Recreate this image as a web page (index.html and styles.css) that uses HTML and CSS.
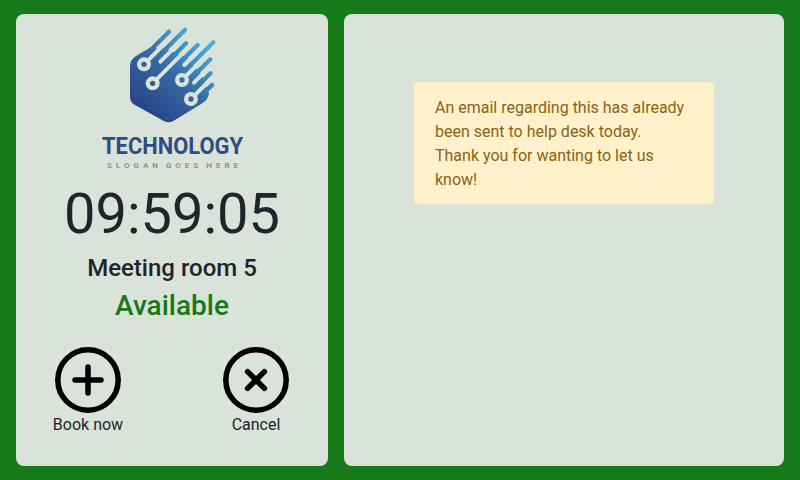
FILE: index.html
```html
<!DOCTYPE html>
<html lang="en">
<head>
<meta charset="utf-8">
<title>Meeting room 5</title>
<link rel="stylesheet" href="styles.css">
</head>
<body>
<main class="screen">
  <section class="card side">
    <svg class="logo" viewBox="80 25 184 156" width="184" height="156" role="img" aria-label="Technology logo">
      <defs>
        <linearGradient id="lg" gradientUnits="userSpaceOnUse" x1="40" y1="260" x2="240" y2="40">
          <stop offset="0" stop-color="#28408a"/>
          <stop offset=".5" stop-color="#35689f"/>
          <stop offset="1" stop-color="#48b0e8"/>
        </linearGradient>
      </defs>
      <g transform="translate(125 25) scale(.3333)">
        <path fill="url(#lg)" d="M15 125Q15 105 32 94L72 70L120 70L190 100L230 150L252 205Q250 225 232 235L150 285Q133 297 115 287L30 240Q15 232 15 215Z"/>
        <g fill="none" stroke="url(#lg)" stroke-width="13" stroke-linecap="round">
          <path d="M75 77L132 20"/>
          <path d="M105 89L180 14"/>
          <path d="M115 123L183 55"/>
          <path d="M160 118L218 60"/>
          <path d="M190 127L265 52"/>
          <path d="M195 164L256 103"/>
          <path d="M215 187L257 145"/>
          <path d="M225 216L261 180"/>
        </g>
        <g fill="none" stroke="#dae3da" stroke-width="12" stroke-linecap="round">
          <path d="M57 118L150 25"/>
          <path d="M106 110L196 20"/>
          <path d="M83 175L205 53"/>
          <path d="M178 120L240 58"/>
          <path d="M171 165L275 61"/>
          <path d="M207 173L270 110"/>
          <path d="M198 222L275 145"/>
        </g>
        <g fill="url(#lg)" stroke="#dae3da" stroke-width="13">
          <circle cx="57" cy="118" r="14.5"/>
          <circle cx="83" cy="175" r="14.5"/>
          <circle cx="171" cy="165" r="14.5"/>
          <circle cx="198" cy="222" r="14.5"/>
        </g>
      </g>
      <text class="logo-name" x="102" y="154" textLength="141" lengthAdjust="spacingAndGlyphs">TECHNOLOGY</text>
      <text class="logo-slogan" x="107" y="168" textLength="131">SLOGAN GOES HERE</text>
    </svg>
    <div class="clock">09:59:05</div>
    <h1 class="room">Meeting room 5</h1>
    <div class="status">Available</div>
    <div class="actions">
      <button class="action" type="button">
        <svg class="action-icon" viewBox="0 0 66 66" width="66" height="66" aria-hidden="true">
          <circle cx="33" cy="33" r="30.2"/>
          <path d="M33 20V46M20 33H46"/>
        </svg>
        <span>Book now</span>
      </button>
      <button class="action" type="button">
        <svg class="action-icon" viewBox="0 0 66 66" width="66" height="66" aria-hidden="true">
          <circle cx="33" cy="33" r="30.2"/>
          <path d="M24.6 24.6L41.4 41.4M41.4 24.6L24.6 41.4"/>
        </svg>
        <span>Cancel</span>
      </button>
    </div>
  </section>
  <section class="card content">
    <div class="alert">An email regarding this has already been sent to help desk today.<br>Thank you for wanting to let us know!</div>
  </section>
</main>
</body>
</html>
```
FILE: styles.css
```css
* { box-sizing: border-box; }
html, body { margin: 0; height: 100%; }
body {
  background: #157a17;
  color: #212529;
  font-family: Roboto, "Liberation Sans", sans-serif;
  font-size: 16px;
  line-height: 1.5;
}
.screen {
  display: flex;
  gap: 16px;
  width: 800px;
  height: 480px;
  padding: 14px 16px;
}
.card {
  background: #dae3da;
  border-radius: 8px;
}
.side {
  flex: 0 0 312px;
  display: flex;
  flex-direction: column;
  align-items: center;
  padding-top: 11px;
}
.content {
  flex: 1;
  display: flex;
  flex-direction: column;
  align-items: center;
  padding-top: 68px;
}
.logo { display: block; flex: none; }
.logo-name {
  font-family: Roboto, sans-serif;
  font-size: 24px;
  font-weight: 700;
  fill: #304c86;
}
.logo-slogan {
  font-family: Roboto, sans-serif;
  font-size: 8px;
  font-weight: 700;
  word-spacing: -2px;
  fill: #8d918e;
}
.clock {
  font-size: 56px;
  line-height: 1.2;
  margin-bottom: 6px;
}
.room {
  margin: 0 0 6px;
  font-size: 24px;
  font-weight: 500;
  line-height: 1.2;
}
.status {
  color: #157a17;
  font-size: 28px;
  font-weight: 500;
  line-height: 1.2;
}
.actions {
  align-self: stretch;
  display: flex;
  justify-content: space-between;
  padding: 24px 37px 0;
}
.action {
  display: flex;
  flex-direction: column;
  align-items: center;
  width: 70px;
  padding: 0;
  border: 0;
  background: none;
  color: #212529;
  font: inherit;
}
.action span { white-space: nowrap; }
.action-icon { display: block; }
.action-icon circle { fill: none; stroke: #000; stroke-width: 5.5; }
.action-icon path { fill: none; stroke: #000; stroke-width: 5.5; stroke-linecap: round; }
.alert {
  width: 300px;
  padding: 13px 20px 11px;
  background: #fff1cc;
  border: 1px solid #ffeeba;
  border-radius: 4px;
  color: #8c6212;
}
```
